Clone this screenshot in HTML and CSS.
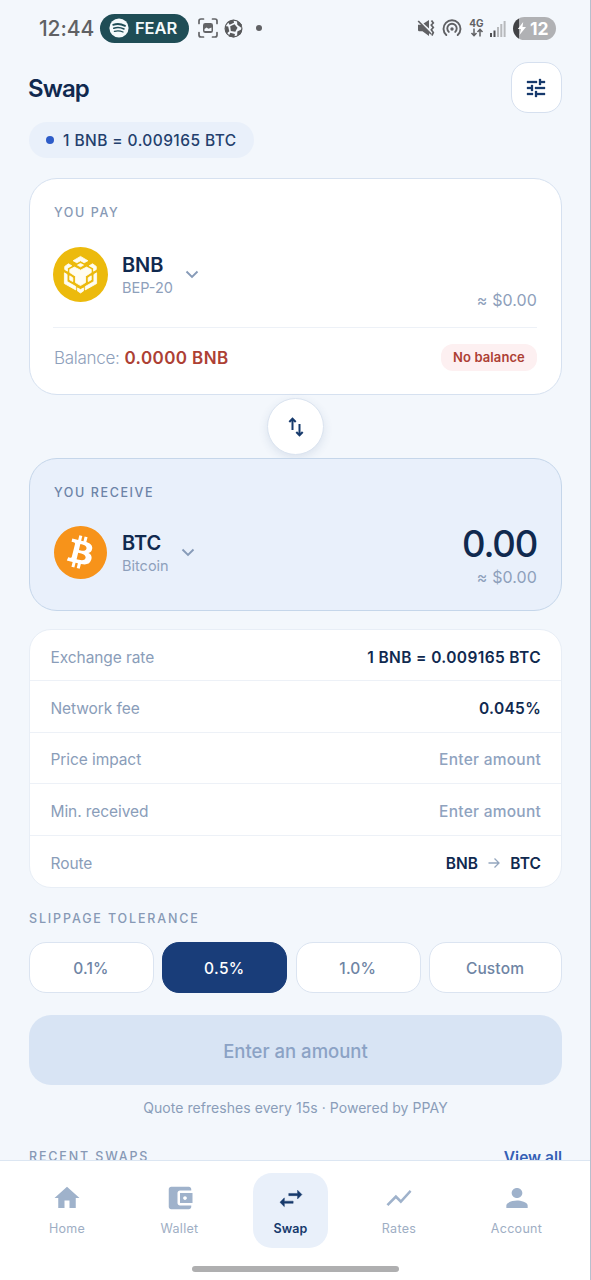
FILE: index.html
```html
<!DOCTYPE html>
<html lang="en">
<head>
<meta charset="utf-8">
<title>Swap</title>
<link rel="stylesheet" href="styles.css">
</head>
<body>
<div class="app">
  <div class="status">
    <span class="clock">12:44</span>
    <span class="media">
      <svg width="20" height="20" viewBox="0 0 20 20"><circle cx="10" cy="10" r="9.6" fill="#f4fafb"/><g fill="none" stroke="#1f4d56" stroke-linecap="round"><path d="M4.2 6.8Q10 4.8 16 7.8" stroke-width="1.9"/><path d="M4.8 10.2Q10 8.6 15 11" stroke-width="1.6"/><path d="M5.4 13.3Q10 12 14 14" stroke-width="1.3"/></g></svg>
      <span class="media-name">FEAR</span>
    </span>
    <svg class="i-shot" width="20" height="20" viewBox="0 0 20 20"><path d="M1 5.5V3Q1 1 3 1H5.500M14.500 1H17Q19 1 19 3V5.500M19 14.500V17Q19 19 17 19H14.500M5.500 19H3Q1 19 1 17V14.500" fill="none" stroke="#636467" stroke-width="1.700" stroke-linecap="round"/><rect x="5" y="5" width="10" height="10" rx="2.300" fill="#636467"/><path d="M6.500 13V11L8.500 9.500L10.500 10.800L13.500 9.500V13Z" fill="#f4f8fd"/></svg>
    <svg class="i-ball" width="19" height="19" viewBox="0 0 19 19"><circle cx="9.500" cy="9.500" r="8.400" fill="#f4f8fd" stroke="#58595b" stroke-width="1.200"/><g fill="#58595b"><path d="M6.200 7.300L10.500 5.300L13.500 8.700L11.300 12.800L6.800 11.900Z"/><path d="M3.800 2.800L9.500.8L10 3.700L5.600 5.700Z"/><path d="M13 1.600L17.900 5.500L16.800 8.400L13.300 5.800Z"/><path d="M.8 7L4.200 7.600L5.300 12.300L2.300 15Z"/><path d="M6.300 13.800L10.900 15L10.300 18.500L4.600 17.500Z"/><path d="M13.300 12.500L18.200 10L16.900 14.900L13.200 17.100Z"/></g></svg>
    <span class="more"></span>
    <span class="spacer"></span>
    <svg class="i-mute" width="18" height="18" viewBox="0 0 18 18"><g fill="#606164"><path d="M1 5.800H4.500L12 13V17L5.500 12.300H2.300Q1 12.300 1 11Z"/><path d="M6.500 4.600L12 1V9.500Z"/></g><g fill="none" stroke="#606164" stroke-width="1.700"><path d="M1.200 2L14 15"/><path d="M14.500 1.500L16.300 4L14.300 6L16.300 8.500L14.300 10.800L16.300 13.500L14.800 16.500"/></g></svg>
    <svg class="i-hot" width="20" height="18" viewBox="0 0 20 18"><g fill="none" stroke="#606164" stroke-width="1.900" stroke-linecap="round"><path d="M4.300 16A8.500 8.500 0 1 1 15.700 16"/><path d="M6.800 12.900A4.700 4.700 0 1 1 13.200 12.900"/></g><circle cx="10" cy="10" r="1.700" fill="#606164"/></svg>
    <span class="net"><span class="net-name">4G</span><svg width="14" height="9" viewBox="0 0 14 9"><path d="M4 .5V7.500M1.500 5L4 7.700L6.500 5M10 8.500V1.500M7.500 4L10 1.300L12.500 4" fill="none" stroke="#606164" stroke-width="1.500"/></svg></span>
    <svg class="i-sig" width="16" height="17" viewBox="0 0 16 17"><path d="M0 13h2v4H0zM3.500 10.500h2V17h-2z" fill="#505154"/><path d="M7 7h2v10H7zM10.300 4h2v13h-2zM13.600 1h2v16h-2z" fill="#b7b9bc"/></svg>
    <span class="battery"><svg width="10" height="15" viewBox="0 0 10 15"><path d="M6.200 1L.8 8H4L2.500 14L9 6H5.500Z" fill="#fff"/></svg>12</span>
  </div>

  <main class="content">
    <header class="head">
      <h1 class="title">Swap</h1>
      <div class="tune"><svg width="24" height="24" viewBox="0 0 24 24"><path d="M3 17v2h6v-2H3zM3 5v2h10V5H3zm10 16v-2h8v-2h-8v-2h-2v6h2zM7 9v2H3v2h4v2h2V9H7zm14 4v-2H11v2h10zm-6-4h2V7h4V5h-4V3h-2v6z" fill="#173a6c" stroke="#173a6c" stroke-width=".3"/></svg></div>
    </header>
    <div class="rate"><span class="rate-dot"></span><span class="t-rate">1 BNB = 0.009165 BTC</span></div>

    <section class="card pay">
      <div class="label t-pay">YOU PAY</div>
      <div class="token">
        <svg class="coin" width="55" height="55" viewBox="0 0 164 164"><circle cx="82" cy="82" r="82" fill="#ecba0c"/><g fill="#fffdf0" stroke="#fffdf0" stroke-width="2.500" stroke-linejoin="round"><path d="M60 41L82 28L104 41L93 47L82 41L71 47Z"/><path d="M82 49L91 54L82 59L73 54Z"/><path d="M35 58L46 50L56 56L43 63V72L35 67Z"/><path d="M129 58L118 50L108 56L121 63V72L129 67Z"/><path d="M50 67L64 60L82 69L100 60L114 67V76L97 87V106L82 115L67 106V87L50 76Z"/><path d="M34 77L42 82V103L68 118V128L34 109Z"/><path d="M130 77L122 82V103L96 118V128L130 109Z"/><path d="M50 86L59 92V103L50 98Z"/><path d="M114 86L105 92V103L114 98Z"/><path d="M73 122L82 127L91 122V131L82 137L73 131Z"/></g></svg>
        <div class="token-name"><b class="t-bnb">BNB</b><span class="t-bep">BEP-20</span></div>
        <svg class="chev" width="14" height="9" viewBox="0 0 14 9"><path d="M1.500 1.500L7 7L12.500 1.500" fill="none" stroke="#879bb8" stroke-width="1.900"/></svg>
        <span class="spacer"></span>
        <span class="fiat fiat-pay">≈ $0.00</span>
      </div>
      <div class="balance"><span class="t-ballabel">Balance:</span><b class="t-bal">0.0000 BNB</b><span class="spacer"></span><span class="none">No balance</span></div>
    </section>

    <div class="flip-row"><div class="flip"><svg width="18" height="22" viewBox="0 0 18 22"><g fill="none" stroke="#173a6c" stroke-width="2"><path d="M5.500 14V3M2.300 6L5.500 2.600L8.700 6M12.500 8V19M9.300 16L12.500 19.400L15.700 16"/></g></svg></div></div>

    <section class="card receive">
      <div class="label t-rec">YOU RECEIVE</div>
      <div class="token">
        <svg class="coin btc" width="53" height="53" viewBox="0 0 24 24"><circle cx="12" cy="12" r="11.500" fill="#fff"/><path fill="#f7931a" d="M23.638 14.904c-1.602 6.43-8.113 10.34-14.542 8.736C2.67 22.05-1.244 15.525.362 9.105 1.962 2.67 8.475-1.243 14.9.358c6.43 1.605 10.342 8.115 8.738 14.548v-.002zm-6.35-4.613c.24-1.59-.974-2.45-2.64-3.03l.54-2.153-1.315-.33-.525 2.107c-.345-.087-.705-.167-1.064-.25l.526-2.127-1.32-.33-.54 2.165c-.285-.067-.565-.132-.84-.2l-1.815-.45-.35 1.407s.975.225.955.236c.535.136.63.486.615.766l-1.477 5.92c-.075.166-.24.406-.614.314.015.02-.96-.24-.96-.24l-.66 1.51 1.71.426.93.242-.54 2.19 1.32.327.54-2.17c.36.1.705.19 1.05.273l-.51 2.154 1.32.33.545-2.19c2.24.427 3.93.257 4.64-1.774.57-1.637-.03-2.58-1.217-3.196.854-.193 1.5-.76 1.68-1.93h.01zm-3.01 4.22c-.404 1.64-3.157.75-4.05.53l.72-2.9c.896.23 3.757.67 3.33 2.37zm.41-4.24c-.37 1.49-2.662.735-3.405.55l.654-2.64c.744.18 3.137.524 2.75 2.084v.006z"/></svg>
        <div class="token-name"><b class="t-btc">BTC</b><span class="t-bitcoin">Bitcoin</span></div>
        <svg class="chev" width="14" height="9" viewBox="0 0 14 9"><path d="M1.500 1.500L7 7L12.500 1.500" fill="none" stroke="#879bb8" stroke-width="1.900"/></svg>
        <span class="spacer"></span>
        <div class="out"><span class="amount">0.00</span><span class="fiat">≈ $0.00</span></div>
      </div>
    </section>

    <section class="details">
      <div class="row"><span>Exchange rate</span><b class="t-v1">1 BNB = 0.009165 BTC</b></div>
      <div class="row"><span>Network fee</span><b class="t-v2">0.045%</b></div>
      <div class="row"><span>Price impact</span><b class="dim">Enter amount</b></div>
      <div class="row"><span>Min. received</span><b class="dim">Enter amount</b></div>
      <div class="row"><span>Route</span><b class="route"><span>BNB</span><svg width="12" height="12" viewBox="0 0 12 12"><path d="M.5 6H11M6.500 1.500L11 6L6.500 10.500" fill="none" stroke="#94a6be" stroke-width="1.300"/></svg><span>BTC</span></b></div>
    </section>

    <div class="label t-slip">SLIPPAGE TOLERANCE</div>
    <div class="options">
      <div class="opt">0.1%</div><div class="opt on">0.5%</div><div class="opt">1.0%</div><div class="opt">Custom</div>
    </div>
    <div class="cta"><span>Enter an amount</span></div>
    <div class="note">Quote refreshes every 15s · Powered by PPAY</div>
    <div class="recent"><span class="label t-recent">RECENT SWAPS</span><b class="all">View all</b></div>
  </main>

  <nav class="nav">
    <div class="tab"><svg width="30" height="30" viewBox="0 0 24 24"><path d="M10 20v-6h4v6h5v-8h3L12 3 2 12h3v8z" fill="#9fb2cb"/></svg><span>Home</span></div>
    <div class="tab"><svg width="30" height="30" viewBox="0 0 24 24"><path d="M21 18v1c0 1.100-.9 2-2 2H5c-1.110 0-2-.9-2-2V5c0-1.100.89-2 2-2h14c1.100 0 2 .9 2 2v1h-9c-1.110 0-2 .9-2 2v8c0 1.100.89 2 2 2h9zm-9-2h10V8H12v8zm4-2.500c-.83 0-1.500-.67-1.500-1.500s.67-1.500 1.500-1.500 1.500.67 1.500 1.500-.67 1.500-1.500 1.500z" fill="#9fb2cb"/></svg><span>Wallet</span></div>
    <div class="tab active"><svg width="30" height="30" viewBox="0 0 24 24"><path d="M22 8l-4-4v3H10v2h8v3zM2 15l4 4v-3h8v-2H6v-3z" fill="#173a6c" stroke="#173a6c" stroke-width=".4" stroke-linejoin="round" transform="translate(1.400 2.200) scale(.88)"/></svg><span>Swap</span></div>
    <div class="tab"><svg width="30" height="30" viewBox="0 0 24 24"><path d="M3.500 18.490l6-6.010 4 4L22 6.920l-1.410-1.410-7.090 7.970-4-4L2 16.990z" fill="#9fb2cb"/></svg><span>Rates</span></div>
    <div class="tab"><svg width="32" height="30" viewBox="0 0 24 24" preserveAspectRatio="none"><path d="M12 12c2.210 0 4-1.790 4-4s-1.790-4-4-4-4 1.790-4 4 1.790 4 4 4zm0 2c-2.670 0-8 1.340-8 4v2h16v-2c0-2.660-5.330-4-8-4z" fill="#9fb2cb"/></svg><span>Account</span></div>
    <div class="gesture"></div>
  </nav>
</div>
</body>
</html>
```
FILE: styles.css
```css
* { box-sizing: border-box; }
body { margin: 0; font-family: Inter, "Liberation Sans", sans-serif; color: #10294f; }
b { font-weight: 600; }
span, b { white-space: nowrap; }
svg { display: block; flex: none; }
.app { width: 591px; height: 1280px; overflow: hidden; background: #f3f7fc; border-right: 1px solid #b7c0ce; display: flex; flex-direction: column; position: relative; }
.spacer { flex: 1; }

.status { height: 56px; flex: none; padding: 0 34px 0 39px; display: flex; align-items: center; color: #606164; }
.clock { font-size: 21px; font-weight: 500; width: 61px; letter-spacing: -0.1px; }
.media { width: 89px; height: 29px; border-radius: 15px; background: #1f4d56; display: flex; align-items: center; padding-left: 9px; gap: 6px; color: #f4fafb; }
.media-name { font-size: 16.500px; font-weight: 600; letter-spacing: -0.1px; }
.i-shot { margin-left: 9px; }
.i-ball { margin-left: 6px; }
.more { width: 6px; height: 6px; border-radius: 50%; background: #606164; margin-left: 13px; }
.i-hot { margin-left: 7px; }
.net { display: flex; flex-direction: column; align-items: center; margin-left: 7px; width: 15px; }
.net-name { font-size: 10px; line-height: 9px; font-weight: 700; }
.i-sig { margin-left: 6px; }
.battery { width: 43px; height: 23px; border-radius: 12px; margin-left: 7px; background: linear-gradient(90deg, #424346 0 6px, #b0b1b4 6px); color: #fff; font-weight: 700; font-size: 17.500px; display: flex; align-items: center; padding-left: 4px; gap: 3px; }

.content { flex: 1; min-height: 0; overflow: hidden; padding: 6px 28px 0 29px; display: flex; flex-direction: column; }
.content > * { flex: none; }
.head { height: 51px; display: flex; justify-content: space-between; align-items: center; }
.title { margin: 2px 0 0 -1px; font-size: 24px; line-height: 30px; font-weight: 600; letter-spacing: -0.9px; }
.tune { width: 51px; height: 51px; border: 1px solid #d6e0ef; border-radius: 17px; background: #fff; display: grid; place-items: center; padding-right: 1px; }
.rate { margin-top: 9px; width: 225px; height: 36px; border-radius: 18px; background: #e9f0fa; display: flex; align-items: center; padding-left: 17px; gap: 9px; color: #233f6d; font-size: 15.500px; font-weight: 500; letter-spacing: .42px; }
.rate-dot { width: 8px; height: 8px; border-radius: 50%; background: #2d5cc8; }

.card { border: 1.500px solid #d6e1f0; border-radius: 28px; padding: 0 24px 0 23px; }
.label { font-size: 12.500px; line-height: 16px; font-weight: 500; letter-spacing: 1.600px; color: #8799b5; }
.card .label { margin-left: 1px; }
.pay { margin-top: 20px; height: 217px; background: #fff; padding-top: 26px; }
.token { display: flex; align-items: center; }
.pay .token { margin-top: 26px; height: 55px; }
.token-name { margin-left: 14px; display: flex; flex-direction: column; }
.pay .token-name { margin-top: 2px; }
.token-name b { font-size: 20px; line-height: 24px; font-weight: 560; letter-spacing: -.1px; }
.token-name span { font-size: 14.500px; line-height: 22px; color: #8ea0bb; }
.chev { margin-left: 12px; }
.fiat { font-size: 16px; line-height: 20px; letter-spacing: .1px; color: #8ea0bb; }
.fiat-pay { align-self: flex-end; margin-bottom: -8px; }
.balance { margin-top: 25px; height: 60px; border-top: 1.500px solid #edf1f7; display: flex; align-items: center; font-size: 17px; color: #8ea0bb; }
.t-ballabel { font-weight: 300; letter-spacing: -.3px; margin-left: 1px; }
.t-bal { margin-left: 5px; color: #ad4034; letter-spacing: .4px; font-weight: 560; }
.none { width: 96px; height: 27px; line-height: 27px; border-radius: 12px; background: #fdf0f1; color: #ad4034; text-align: center; font-size: 13px; font-weight: 600; letter-spacing: .1px; }

.flip-row { height: 63px; display: grid; place-items: center; }
.flip { width: 57px; height: 57px; border-radius: 50%; border: 1px solid #dbe4f0; background: #fff; display: grid; place-items: center; box-shadow: 0 3px 10px rgba(50, 80, 130, .12); }

.receive { height: 153px; background: #e9f0fb; border-color: #c5d6ea; padding-top: 26px; }
.receive .label { color: #6c83a7; }
.receive .token { margin-top: 17px; height: 68px; padding-left: 1px; }
.receive .token-name { margin-left: 15px; margin-top: 4px; }
.out { display: flex; flex-direction: column; align-items: flex-end; margin-top: 5px; }
.amount { font-size: 36.500px; line-height: 42px; font-weight: 540; letter-spacing: -1.200px; }
.out .fiat { margin-top: 2px; }

.details { margin-top: 18px; height: 259px; border: 1.500px solid #e8eef6; border-radius: 22px; background: #fff; display: grid; grid-template-rows: repeat(5, 1fr); }
.row { display: flex; justify-content: space-between; align-items: center; padding: 4px 20px 0 20.500px; border-bottom: 1.500px solid #edf1f7; font-size: 15.500px; color: #8a9db9; }
.row > span { letter-spacing: -.08px; }
.row:last-child { border-bottom: 0; }
.row b { color: #10294f; }
.row .t-v1 { letter-spacing: .38px; }
.row .t-v2 { letter-spacing: .3px; }
.row .dim { color: #8fa3bf; font-weight: 500; letter-spacing: .25px; }
.route { display: flex; align-items: center; gap: 10px; letter-spacing: .1px; }

.t-slip { margin-top: 23px; letter-spacing: 1.850px; }
.options { margin-top: 15px; height: 51px; display: grid; grid-template-columns: 125px 125px 125px 133px; justify-content: space-between; }
.opt { border: 1.500px solid #dbe4f1; border-radius: 17px; background: #fff; display: grid; place-items: center; font-size: 15.500px; font-weight: 500; color: #6e84a4; letter-spacing: .15px; padding-right: 1px; padding-top: 1px; }
.on { background: #193d79; border-color: #193d79; color: #fff; letter-spacing: .4px; }
.cta { margin-top: 22px; height: 70px; border-radius: 22px; background: #d8e4f4; display: grid; place-items: center; padding-top: 2px; font-size: 18.500px; font-weight: 500; color: #8ba2c5; }
.note { margin-top: 13px; line-height: 20px; font-size: 14px; letter-spacing: .05px; text-align: center; color: #8a9db9; }
.recent { margin-top: 28px; height: 22px; display: flex; justify-content: space-between; align-items: center; }
.t-recent { letter-spacing: 1.850px; }
.all { font-size: 15.500px; color: #3560b5; }

.nav { flex: none; height: 120px; background: #fff; border-top: 1.500px solid #dce6f2; position: relative; padding-top: 12px; display: grid; grid-template-columns: 134px 91px 131px 86px 149px; justify-items: center; }
.tab { width: 75px; height: 75px; border-radius: 19px; display: flex; flex-direction: column; align-items: center; padding-top: 10px; font-size: 12.500px; color: #9eaec4; letter-spacing: .3px; }
.tab span { margin-top: 7px; line-height: 18px; }
.active { background: #e9f0fa; color: #173a6c; font-weight: 600; letter-spacing: .1px; }
.gesture { position: absolute; left: 192px; top: 105px; width: 207px; height: 6px; border-radius: 3px; background: #afafb0; }
```
